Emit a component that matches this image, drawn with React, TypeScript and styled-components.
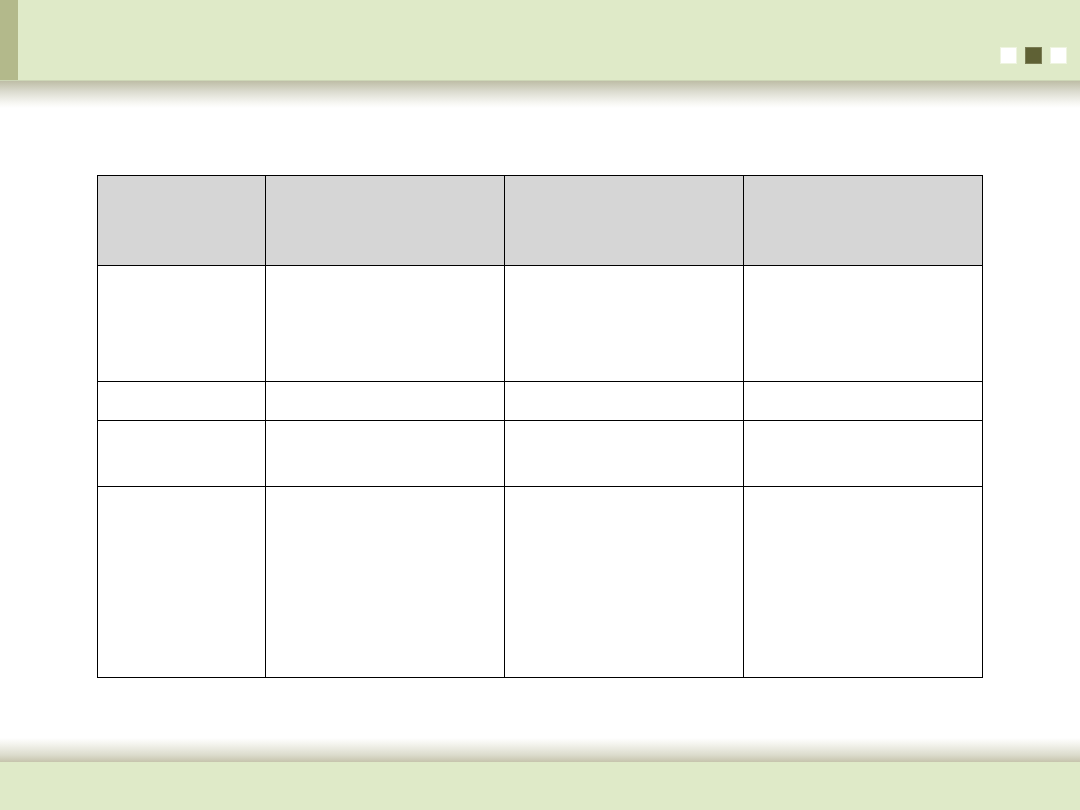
import styled, { createGlobalStyle } from 'styled-components';

const GlobalStyle = createGlobalStyle`
  html, body {
    margin: 0;
    padding: 0;
    background: #ffffff;
    font-family: "Liberation Sans", Arial, sans-serif;
  }
`;

const columns = [168, 239, 239, 239];
const rows = [116, 39, 66, 191];

const App = () => {
  return (
    <Page>
      <GlobalStyle />
      <Header>
        <SideBar />
        <Squares>
          <Square />
          <Square $dark />
          <Square />
        </Squares>
      </Header>
      <TopShade />
      <Main>
        <Table>
          <colgroup>
            {columns.map((w, i) => (
              <col key={i} style={{ width: w }} />
            ))}
          </colgroup>
          <thead>
            <tr>
              {columns.map((_, i) => (
                <HeadCell key={i} />
              ))}
            </tr>
          </thead>
          <tbody>
            {rows.map((h, r) => (
              <tr key={r} style={{ height: h }}>
                {columns.map((_, i) => (
                  <Cell key={i} />
                ))}
              </tr>
            ))}
          </tbody>
        </Table>
      </Main>
      <Footer>
        <BottomShade />
        <FooterBar />
      </Footer>
    </Page>
  );
};

export default App;

const Page = styled.div`
  width: 1080px;
  height: 810px;
  display: flex;
  flex-direction: column;
  overflow: hidden;
`;

const Header = styled.header`
  height: 80px;
  display: flex;
  align-items: flex-start;
  justify-content: space-between;
  background-color: #dfeac8;
  border-bottom: 1px solid #cdd6b6;
`;

const SideBar = styled.div`
  width: 18px;
  height: 80px;
  background-color: #b3b98b;
`;

const Squares = styled.div`
  display: flex;
  gap: 8px;
  margin-top: 47px;
  margin-right: 13px;
`;

const Square = styled.div<{ $dark?: boolean }>`
  width: 17px;
  height: 17px;
  box-sizing: border-box;
  background-color: ${(p) => (p.$dark ? '#5f6135' : '#ffffff')};
  border: 1px solid ${(p) => (p.$dark ? '#7b7d55' : '#eef4e0')};
`;

const TopShade = styled.div`
  height: 27px;
  background: linear-gradient(to bottom, #bebda6 0%, #dcdcd0 40%, #f6f6f2 80%, #ffffff 100%);
`;

const Main = styled.main`
  flex: 1;
  padding-top: 67px;
  padding-left: 97px;
`;

const Table = styled.table`
  border-collapse: collapse;
  table-layout: fixed;
  width: 886px;

  tr > * {
    border: 1px solid #000000;
    padding: 0;
  }
`;

const HeadCell = styled.th`
  height: 89px;
  background-color: #d6d6d6;
`;

const Cell = styled.td`
  background-color: #ffffff;
`;

const Footer = styled.footer`
  display: flex;
  flex-direction: column;
`;

const BottomShade = styled.div`
  height: 24px;
  background: linear-gradient(to bottom, #ffffff 0%, #f4f4ee 25%, #dcdccd 70%, #c6c4ad 100%);
`;

const FooterBar = styled.div`
  height: 48px;
  background-color: #dfeac8;
`;
